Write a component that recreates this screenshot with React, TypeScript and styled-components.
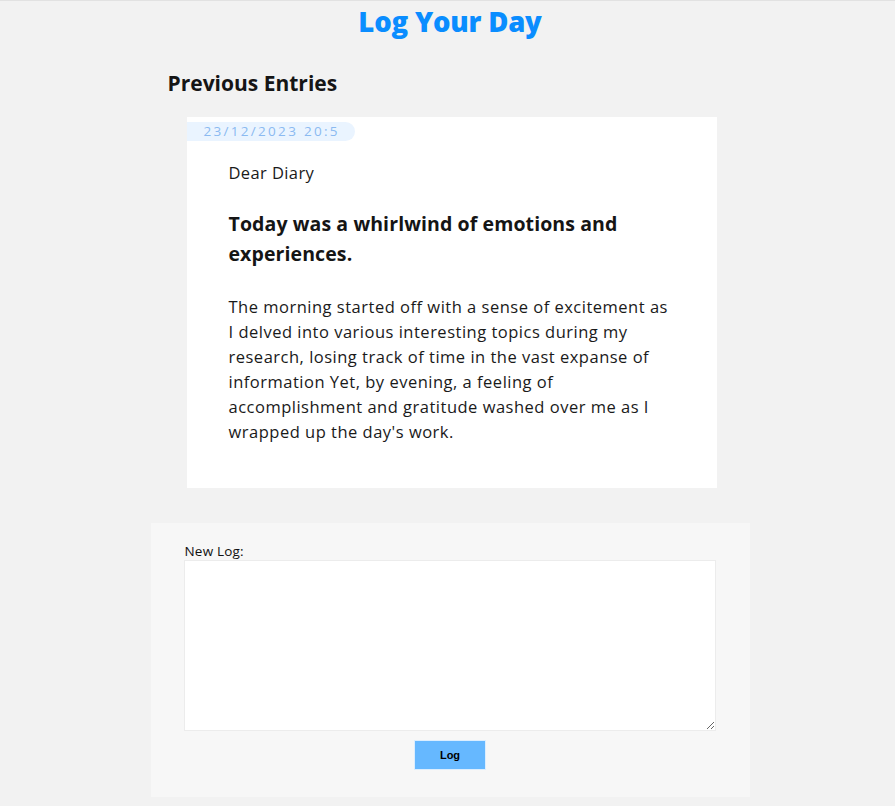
import React from "react";
import styled, { createGlobalStyle } from "styled-components";

const Global = createGlobalStyle`
  html, body { margin: 0; padding: 0; background: #f2f2f2; }
  body {
    font-family: "Open Sans", "Liberation Sans", sans-serif;
    color: #111;
    border-top: 1px solid #e2e2e2;
    padding-left: 5px;
    min-height: 805px;
    box-sizing: border-box;
  }
`;

const Page = styled.main`
  width: 599px;
  margin: 0 auto;
  display: flex;
  flex-direction: column;
`;

const Title = styled.h1`
  margin: 3px 0 0;
  text-align: center;
  font-family: "Open Sans", sans-serif;
  font-weight: 800;
  font-size: 27.5px;
  line-height: 36px;
  color: #0a8dff;
  letter-spacing: -0.2px;
`;

const SectionTitle = styled.h2`
  margin: 29px 0 0 17px;
  font-weight: 700;
  font-size: 21px;
  line-height: 28px;
  letter-spacing: 0px;
  color: #151515;
`;

const Card = styled.article`
  margin: 20px 0 0 36px;
  width: 530px;
  height: 371px;
  background: #fff;
  padding-top: 5px;
  box-sizing: border-box;
`;

const DatePill = styled.div`
  width: 168px;
  height: 19px;
  background: #eaf4ff;
  border-radius: 0 10px 10px 0;
  color: #8bbaf1;
  font-size: 13.5px;
  line-height: 19px;
  letter-spacing: 2.3px;
  padding-left: 17px;
  box-sizing: border-box;
  overflow: hidden;
  white-space: nowrap;
`;

const Body = styled.div`
  padding: 20px 42px 0 42px;
  display: flex;
  flex-direction: column;
`;

const Greeting = styled.p`
  margin: 0;
  font-size: 16.5px;
  line-height: 24px;
  letter-spacing: 0.4px;
  color: #1a1a1a;
`;

const Headline = styled.h3`
  margin: 24px 0 0;
  font-size: 19.5px;
  font-weight: 700;
  line-height: 30px;
  letter-spacing: 0.1px;
  color: #151515;
`;

const Paragraph = styled.p`
  margin: 25px 0 0;
  font-size: 16.5px;
  line-height: 25px;
  letter-spacing: 0.5px;
  color: #1a1a1a;
`;

const Form = styled.form`
  margin-top: 35px;
  background: #f7f7f7;
  height: 274px;
  padding: 20px 33px 0 33px;
  box-sizing: border-box;
  display: flex;
  flex-direction: column;
`;

const Label = styled.label`
  font-size: 13.5px;
  line-height: 17px;
  letter-spacing: 0.2px;
  color: #111;
  padding-left: 1px;
`;

const TextArea = styled.textarea`
  width: 532px;
  height: 171px;
  box-sizing: border-box;
  border: 1px solid #ececec;
  background: #fff;
  resize: both;
  margin: 0;
  outline: none;
`;

const Button = styled.button`
  align-self: center;
  margin-top: 9px;
  width: 72px;
  height: 30px;
  border: 1px solid #dceeff;
  background: #66b8ff;
  color: #000;
  font-family: "Liberation Sans", Arial, sans-serif;
  font-weight: 700;
  font-size: 11px;
  cursor: pointer;
`;

export default function App() {
  return (
    <>
      <Global />
      <Page>
        <Title>Log Your Day</Title>
        <SectionTitle>Previous Entries</SectionTitle>
        <Card>
          <DatePill>23/12/2023 20:5</DatePill>
          <Body>
            <Greeting>Dear Diary</Greeting>
            <Headline>Today was a whirlwind of emotions and experiences.</Headline>
            <Paragraph>
              The morning started off with a sense of excitement as I delved into various
              interesting topics during my research, losing track of time in the vast expanse
              of information Yet, by evening, a feeling of accomplishment and gratitude washed
              over me as I wrapped up the day's work.
            </Paragraph>
          </Body>
        </Card>
        <Form onSubmit={(e) => e.preventDefault()}>
          <Label htmlFor="log">New Log:</Label>
          <TextArea id="log" />
          <Button type="submit">Log</Button>
        </Form>
      </Page>
    </>
  );
}
